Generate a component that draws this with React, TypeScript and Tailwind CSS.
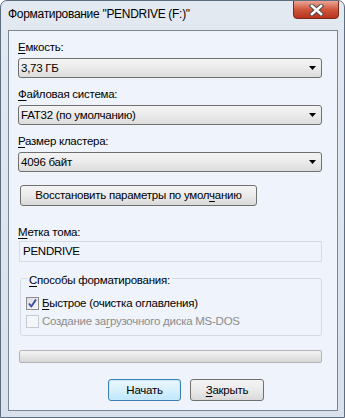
import React from "react";

const font = { fontFamily: '"Liberation Sans", Arial, sans-serif' };

function Arrow() {
  return (
    <svg width="7" height="4" viewBox="0 0 7 4" className="block">
      <path d="M0 0 H7 L3.5 4 Z" fill="#000" />
    </svg>
  );
}

function Combo({ value }: { value: string }) {
  return (
    <div className="h-[20px] flex items-center justify-between pl-[2px] pr-[5px] border border-[#707070] rounded-[3px] bg-gradient-to-b from-[#f4f4f4] via-[#ebebeb] to-[#dcdcdc] text-black">
      <span>{value}</span>
      <Arrow />
    </div>
  );
}

function U({ c }: { c: string }) {
  return <span className="underline underline-offset-[2px]">{c}</span>;
}

function CheckBox({ checked, disabled }: { checked?: boolean; disabled?: boolean }) {
  return (
    <div
      className={
        "w-[13px] h-[13px] border flex items-center justify-center shrink-0 " +
        (disabled
          ? "border-[#c4cbd4] bg-[#f4f6f9]"
          : "border-[#8f8f8f] bg-gradient-to-br from-[#dcdcdc] to-[#f8f8f8]")
      }
    >
      {checked && (
        <svg width="11" height="11" viewBox="0 0 11 11">
          <path
            d="M2 5.5 L4.3 8.5 L9 1.5"
            stroke="#3b4ea6"
            strokeWidth="1.9"
            fill="none"
            strokeLinejoin="round"
          />
        </svg>
      )}
    </div>
  );
}

export default function App() {
  return (
    <div
      className="w-[345px] h-[418px] flex flex-col border border-[#5f6d80] rounded-t-[7px] bg-gradient-to-b from-[#e3e9f1] via-[#dde5ef] to-[#d8e1ec] overflow-hidden text-[11.5px] tracking-[-0.25px]"
      style={font}
    >
      {/* title bar */}
      <div className="h-[29px] flex items-start justify-between shrink-0">
        <div className="pl-[7px] pt-[6px] text-[12px] leading-[15px] tracking-[-0.3px] text-black">
          Форматирование "PENDRIVE (F:)"
        </div>
        <div className="mr-[5px] mt-[-1px] w-[46px] h-[19px] rounded-b-[4px] border border-[#7a2a1c] bg-gradient-to-b from-[#e9a596] via-[#cf563c] to-[#b8321d] flex items-center justify-center">
          <svg width="15" height="12" viewBox="0 0 15 12">
            <path
              d="M3 2 L12 10 M12 2 L3 10"
              stroke="#4a4a4a"
              strokeWidth="4.4"
              strokeLinecap="square"
            />
            <path
              d="M3 2 L12 10 M12 2 L3 10"
              stroke="#fff"
              strokeWidth="2.6"
              strokeLinecap="square"
            />
          </svg>
        </div>
      </div>

      {/* client area */}
      <div className="flex-1 ml-[7px] mr-[6px] mb-[6px] border border-[#7b8592] bg-[#eef3fc] flex flex-col pl-[9px] pr-[15px] pt-[9px] leading-[15px] text-black">
        <div className="h-[15px]">
          <U c="Е" />мкость:
        </div>
        <div className="mt-[3px]">
          <Combo value="3,73 ГБ" />
        </div>

        <div className="mt-[9px] h-[15px]">
          <U c="Ф" />айловая система:
        </div>
        <div className="mt-[3px]">
          <Combo value="FAT32 (по умолчанию)" />
        </div>

        <div className="mt-[9px] h-[15px]">
          <U c="Р" />азмер кластера:
        </div>
        <div className="mt-[3px]">
          <Combo value="4096 байт" />
        </div>

        <div className="mt-[13px] ml-[2px] w-[237px] h-[21px] border border-[#707070] rounded-[3px] bg-gradient-to-b from-[#f4f4f4] via-[#ebebeb] to-[#d9d9d9] flex items-center justify-center">
          <span>
            Восстановить параметры по умол<U c="ч" />анию
          </span>
        </div>

        <div className="mt-[19px] h-[15px]">
          <U c="М" />етка тома:
        </div>
        <div className="mt-[1px] ml-[1px] h-[21px] border border-[#d8dde5] bg-[#eef3fc] flex items-center pl-[3px]">
          PENDRIVE
        </div>

        {/* group box */}
        <div className="mt-[16px] ml-[2px] h-[58px] border border-[#d3dbe4] rounded-[3px] flex flex-col pl-[5px]">
          <div className="mt-[-6px] ml-[1px] self-start bg-[#eef3fc] px-[2px] h-[15px]">
            <U c="С" />пособы форматирования:
          </div>
          <div className="mt-[8px] h-[15px] flex items-center gap-[3px]">
            <CheckBox checked />
            <span>
              <U c="Б" />ыстрое (очистка оглавления)
            </span>
          </div>
          <div className="mt-[3px] h-[15px] flex items-center gap-[3px] text-[#8d8d8d]">
            <CheckBox disabled />
            <span>
              Создание за<U c="г" />рузочного диска MS-DOS
            </span>
          </div>
        </div>

        <div className="mt-[14px] ml-[1px] h-[13px] border border-[#b4b4b4] rounded-[2px] bg-gradient-to-b from-[#f3f3f3] via-[#e6e6e6] to-[#d6d6d6]" />

        <div className="mt-[16px] ml-[90px] flex gap-[9px]">
          <div className="w-[73px] h-[22px] border border-[#3c7fb1] rounded-[3px] bg-gradient-to-b from-[#eaf6fd] via-[#d9f0fc] to-[#bee6fd] flex items-center justify-center shadow-[inset_0_0_0_1px_#c8eafc]">
            Начать
          </div>
          <div className="w-[74px] h-[22px] border border-[#707070] rounded-[3px] bg-gradient-to-b from-[#f4f4f4] via-[#ebebeb] to-[#d9d9d9] flex items-center justify-center">
            <span>
              <U c="З" />акрыть
            </span>
          </div>
        </div>
      </div>
    </div>
  );
}
